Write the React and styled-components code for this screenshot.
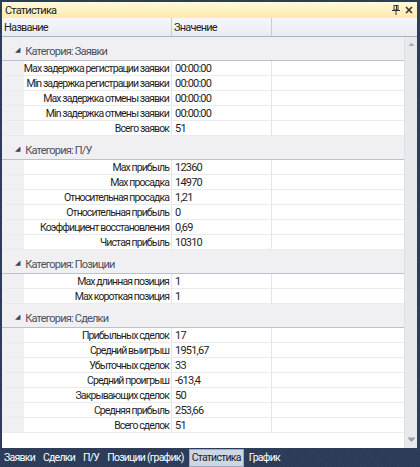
import React from 'react';
import styled, { createGlobalStyle } from 'styled-components';

const Global = createGlobalStyle`
  html, body { margin: 0; padding: 0; }
  body {
    background: #2b3b58;
    font-family: Roboto, "Noto Sans", sans-serif;
    font-size: 11px;
    letter-spacing: -0.8px;
    color: #1e1e1e;
  }
`;

let Screen = styled.div`
  height: 467px;
  display: flex;
  flex-direction: column;
  background: #2b3b58;
  background-image: repeating-linear-gradient(45deg, rgba(255,255,255,0.025) 0 1px, transparent 1px 3px);
`;

let Panel = styled.div`
  flex: 1;
  margin: 2px 3px 0 2px;
  display: flex;
  flex-direction: column;
  background: #f0f0f2;
  min-height: 0;
`;

let TitleBar = styled.div`
  height: 16px;
  display: flex;
  align-items: center;
  justify-content: space-between;
  padding: 0 4px 0 3px;
  background: linear-gradient(#fff9e0, #ffeaa8);
  color: #1b1b1b;
`;

let TitleIcons = styled.div`
  display: flex;
  gap: 5px;
  align-items: center;
`;

let Header = styled.div`
  height: 18px;
  display: grid;
  grid-template-columns: 170px 100px 1fr;
  background: linear-gradient(#f6f7f9, #e9ecf1);
  border-bottom: 1px solid #a8b3c4;
`;

let HeadCell = styled.div`
  display: flex;
  align-items: center;
  padding-left: 2px;
  border-right: ${p => (p.last ? 'none' : '1px solid #c6ccd6')};
`;

let Body = styled.div`
  flex: 1;
  display: flex;
  min-height: 0;
`;

let Content = styled.div`
  flex: 1;
  background: #fff;
  display: flex;
  flex-direction: column;
`;

let Category = styled.div`
  height: 24px;
  box-sizing: border-box;
  display: flex;
  align-items: flex-end;
  padding: 0 0 2px 13px;
  gap: 6px;
  background: #f0f0f2;
  color: #4a5160;
  border-bottom: 1px solid #b7c1d1;
`;

let Arrow = styled.span`
  font-size: 7px;
  color: #444;
  position: relative;
  top: -4px;
`;

let Row = styled.div`
  height: 15px;
  box-sizing: border-box;
  display: grid;
  grid-template-columns: 22px 148px 100px 1fr;
  border-bottom: 1px solid #e9ebef;
`;

let Gutter = styled.div`
  background: #f0f0f2;
`;

let Cell = styled.div`
  display: flex;
  align-items: center;
  justify-content: ${p => (p.right ? 'flex-end' : 'flex-start')};
  padding: ${p => (p.right ? '0 2px 0 0' : '0 0 0 3px')};
  font-size: ${p => (p.right ? '10.5px' : '11px')};
  letter-spacing: ${p => (p.right ? '-0.9px' : '-0.8px')};
  border-right: 1px solid #e3e5ea;
  white-space: nowrap;
  overflow: hidden;
`;

let Filler = styled.div`
  flex: 1;
`;

let Scrollbar = styled.div`
  width: 12px;
  background: #e8e9ed;
  border-left: 1px solid #dcdfe5;
  display: flex;
  flex-direction: column;
  justify-content: space-between;
  align-items: center;
  padding: 5px 0 6px;
`;

let TabBar = styled.div`
  height: 19px;
  display: flex;
  align-items: center;
  padding-left: 1px;
`;

let Tab = styled.div`
  height: 16px;
  display: flex;
  align-items: center;
  padding: 0 2px;
  margin-right: 2px;
  font-size: 10.5px;
  letter-spacing: -0.75px;
  color: ${p => (p.active ? '#1b1b1b' : '#ffffff')};
  background: ${p => (p.active ? '#ced5e3' : 'transparent')};
  border: 1px solid ${p => (p.active ? '#9ca8bd' : 'transparent')};
`;

let groups = [
  {
    name: 'Заявки',
    rows: [
      ['Max задержка регистрации заявки', '00:00:00'],
      ['Min задержка регистрации заявки', '00:00:00'],
      ['Max задержка отмены заявки', '00:00:00'],
      ['Min задержка отмены заявки', '00:00:00'],
      ['Всего заявок', '51'],
    ],
  },
  {
    name: 'П/У',
    rows: [
      ['Max прибыль', '12360'],
      ['Max просадка', '14970'],
      ['Относительная просадка', '1,21'],
      ['Относительная прибыль', '0'],
      ['Коэффициент восстановления', '0,69'],
      ['Чистая прибыль', '10310'],
    ],
  },
  {
    name: 'Позиции',
    rows: [
      ['Max длинная позиция', '1'],
      ['Max короткая позиция', '1'],
    ],
  },
  {
    name: 'Сделки',
    rows: [
      ['Прибыльных сделок', '17'],
      ['Средний выигрыш', '1951,67'],
      ['Убыточных сделок', '33'],
      ['Средний проигрыш', '-613,4'],
      ['Закрывающих сделок', '50'],
      ['Средняя прибыль', '253,66'],
      ['Всего сделок', '51'],
    ],
  },
];

let tabs = ['Заявки', 'Сделки', 'П/У', 'Позиции (график)', 'Статистика', 'График'];

function PinIcon() {
  return (
    <svg width="8" height="10" viewBox="0 0 8 10">
      <rect x="2" y="0.5" width="4" height="4.5" fill="none" stroke="#333" strokeWidth="1" />
      <rect x="4" y="1" width="1" height="4" fill="#333" />
      <line x1="0" y1="5.5" x2="8" y2="5.5" stroke="#333" strokeWidth="1" />
      <line x1="4" y1="6" x2="4" y2="10" stroke="#333" strokeWidth="1" />
    </svg>
  );
}

function CloseIcon() {
  return (
    <svg width="8" height="8" viewBox="0 0 8 8">
      <path d="M1 1 L7 7 M7 1 L1 7" stroke="#333" strokeWidth="1.6" />
    </svg>
  );
}

function ScrollArrow({ down }) {
  return (
    <svg width="7" height="5" viewBox="0 0 7 5">
      {down
        ? <path d="M0 0 H7 M0.5 1.5 H6.5 L3.5 4.5 Z" stroke="#9ba2ae" fill="#9ba2ae" strokeWidth="1" />
        : <path d="M3.5 0.5 L6.5 4 H0.5 Z" fill="#a5acb8" />}
    </svg>
  );
}

function App() {
  return (
    <Screen>
      <Global />
      <Panel>
        <TitleBar>
          <span>Статистика</span>
          <TitleIcons>
            <PinIcon />
            <CloseIcon />
          </TitleIcons>
        </TitleBar>
        <Header>
          <HeadCell>Название</HeadCell>
          <HeadCell>Значение</HeadCell>
          <HeadCell last />
        </Header>
        <Body>
          <Content>
            {groups.map(g => (
              <React.Fragment key={g.name}>
                <Category>
                  <Arrow>◢</Arrow>
                  <span>Категория: {g.name}</span>
                </Category>
                {g.rows.map(([label, value]) => (
                  <Row key={label}>
                    <Gutter />
                    <Cell right>{label}</Cell>
                    <Cell>{value}</Cell>
                    <div />
                  </Row>
                ))}
              </React.Fragment>
            ))}
            <Filler />
          </Content>
          <Scrollbar>
            <ScrollArrow />
            <ScrollArrow down />
          </Scrollbar>
        </Body>
      </Panel>
      <TabBar>
        {tabs.map(t => (
          <Tab key={t} active={t === 'Статистика'}>{t}</Tab>
        ))}
      </TabBar>
    </Screen>
  );
}

export default App;
